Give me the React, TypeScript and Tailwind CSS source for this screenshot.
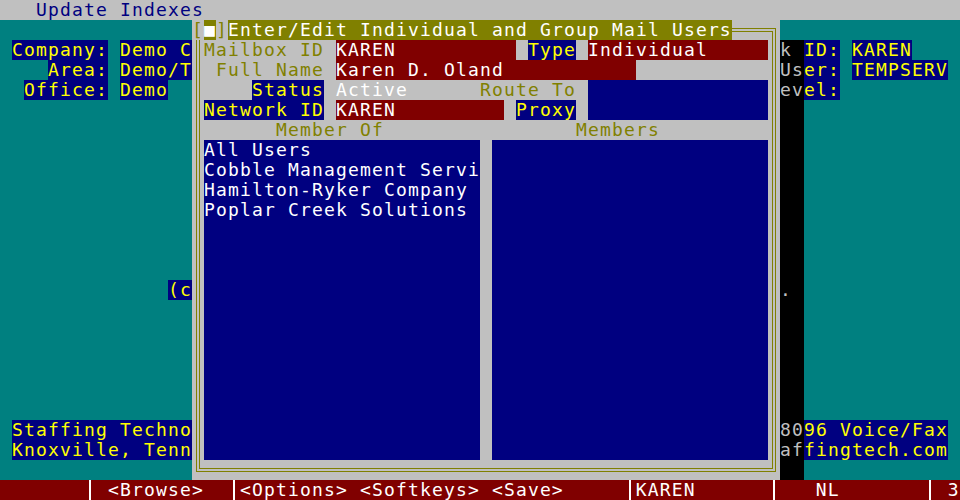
import React from "react";

// text-mode screen: 80 cols x 25 rows, each cell 12x20
type Seg = [string, string?];

const B = "bg-[#000080] text-[#ffff00]";
const O = "text-[#808000]";
const R = "bg-[#800000] text-white";
const BL = "bg-[#000080]";

const pad = (s: string, n: number) => s + " ".repeat(Math.max(0, n - s.length));

function Line({ segs = [], className = "" }: { segs?: Seg[]; className?: string }) {
  return (
    <div className={`flex h-5 whitespace-pre ${className}`}>
      {segs.map(([t, c], i) => (
        <span key={i} className={c ?? ""}>
          {t}
        </span>
      ))}
    </div>
  );
}

// rows 1..23 of the side columns
const LEFT: Record<number, Seg[]> = {
  2: [[" "], ["Company:", B], [" "], ["Demo C", B]],
  3: [["    "], ["Area:", B], [" "], ["Demo/T", B]],
  4: [["  "], ["Office:", B], [" "], ["Demo", B]],
  14: [["              "], ["(c", B]],
  21: [[" "], ["Staffing Techno", B]],
  22: [[" "], ["Knoxville, Tenn", B]],
};

const SHADOW: Record<number, string> = { 2: "k ", 3: "Us", 4: "ev", 14: ". ", 21: "80", 22: "af" };

const RIGHT: Record<number, Seg[]> = {
  2: [["ID:", B], [" "], ["KAREN", B]],
  3: [["er:", B], [" "], ["TEMPSERV", B]],
  4: [["el:", B]],
  21: [["96 Voice/Fax", B]],
  22: [["fingtech.com", B]],
};

const ROWS = Array.from({ length: 23 }, (_, i) => i + 1);

const MEMBER_OF = ["All Users", "Cobble Management Servi", "Hamilton-Ryker Company", "Poplar Creek Solutions"];

function Bar() {
  return (
    <span className="flex w-3 h-5 justify-center">
      <span className="w-[2px] h-full bg-white" />
    </span>
  );
}

function Dialog() {
  return (
    <div className="relative w-[588px] h-full bg-[#c0c0c0] flex flex-col">
      {/* double-line frame */}
      <div className="absolute left-1 top-2 right-1 bottom-2 border-4 border-double border-[#808000] pointer-events-none" />

      <Line
        segs={[
          ["[", `${O} relative bg-[#c0c0c0]`],
          ["■", "relative bg-[#808000] text-white"],
          ["]", `${O} relative bg-[#c0c0c0]`],
          ["Enter/Edit Individual and Group Mail Users", "relative bg-[#808000] text-white"],
        ]}
      />
      <Line
        segs={[
          [" "],
          ["Mailbox ID", O],
          [" "],
          [pad("KAREN", 15), R],
          [" "],
          ["Type", B],
          [" "],
          [pad("Individual", 15), R],
        ]}
      />
      <Line segs={[["  "], ["Full Name", O], [" "], [pad("Karen D. Oland", 25), R]]} />
      <Line
        segs={[
          ["     "],
          ["Status", B],
          [" "],
          [pad("Active", 12), "text-white"],
          ["Route To", O],
          [" "],
          [pad("", 15), BL],
        ]}
      />
      <Line
        segs={[
          [" "],
          ["Network ID", B],
          [" "],
          [pad("KAREN", 14), R],
          [" "],
          ["Proxy", B],
          [" "],
          [pad("", 15), BL],
        ]}
      />
      <Line segs={[["       "], ["Member Of", O], [pad("", 16)], ["Members", O]]} />

      <div className="flex h-[320px] pl-3 gap-3">
        <div className="w-[276px] bg-[#000080] text-white flex flex-col">
          {MEMBER_OF.map((m) => (
            <Line key={m} segs={[[m]]} />
          ))}
        </div>
        <div className="w-[276px] bg-[#000080]" />
      </div>
      <div className="h-5" />
    </div>
  );
}

export default function App() {
  return (
    <div className="w-[960px] h-[500px] overflow-hidden flex flex-col font-['DejaVu_Sans_Mono',monospace] text-[18px] tracking-[1.16px] leading-5">
      <Line className="bg-[#c0c0c0] text-[#000080]" segs={[["   Update Indexes"]]} />

      <div className="flex h-[460px]">
        <div className="w-[192px] bg-[#008080] flex flex-col">
          {ROWS.map((r) => (
            <Line key={r} segs={LEFT[r]} />
          ))}
        </div>

        <Dialog />

        <div className="w-[24px] flex flex-col">
          {ROWS.map((r) => (
            <Line
              key={r}
              className={r === 1 ? "bg-[#008080]" : "bg-black text-[#c0c0c0]"}
              segs={SHADOW[r] ? [[SHADOW[r]]] : []}
            />
          ))}
        </div>

        <div className="w-[156px] bg-[#008080] flex flex-col">
          {ROWS.map((r) => (
            <Line key={r} segs={RIGHT[r]} />
          ))}
        </div>
      </div>

      {/* status line */}
      <div className="flex h-5 bg-[#800000] text-white whitespace-pre">
        <span>{"       "}</span>
        <Bar />
        <span>{" <Browse>  "}</span>
        <Bar />
        <span>{pad("<Options> <Softkeys> <Save>", 32)}</span>
        <Bar />
        <span>{pad("KAREN", 11)}</span>
        <Bar />
        <span>{pad("   NL", 12)}</span>
        <Bar />
        <span>{" 3"}</span>
      </div>
    </div>
  );
}
